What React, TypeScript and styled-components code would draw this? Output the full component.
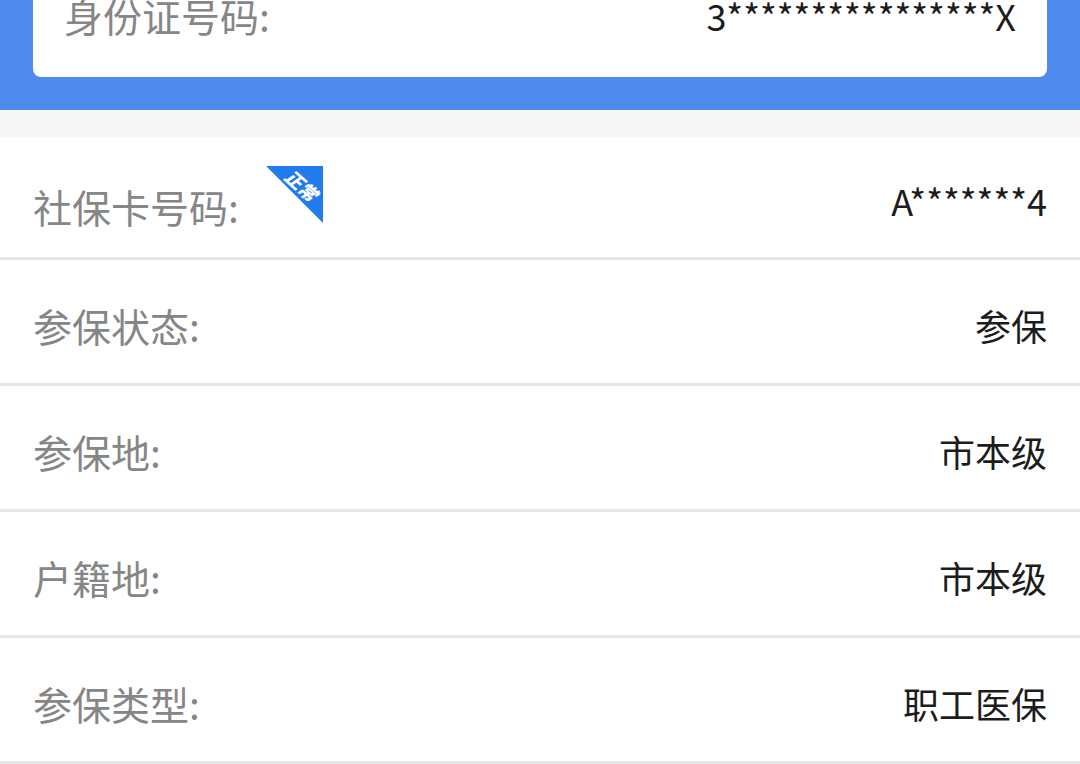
import React from "react";
import styled, { createGlobalStyle } from "styled-components";

const GlobalStyle = createGlobalStyle`
  * { box-sizing: border-box; }
  body {
    margin: 0;
    background: #fff;
    font-family: "Noto Sans CJK SC", "Noto Sans", sans-serif;
  }
`;

const Banner = styled.header`
  background: #4f8bec;
  padding: 0 33px 33px;
`;

const Card = styled.dl`
  margin: 0;
  height: 77px;
  padding: 0 31px 34px;
  display: flex;
  align-items: flex-end;
  justify-content: space-between;
  background: #fff;
  border-radius: 0 0 8px 8px;
`;

const Gap = styled.div`
  height: 27px;
  background: #f7f7f7;
`;

const List = styled.dl`
  margin: 0;
`;

const Row = styled.div`
  display: flex;
  align-items: center;
  justify-content: space-between;
  height: 126px;
  padding: 6px 33px 0;
  border-bottom: 3px solid #e6e6e6;

  &:first-child {
    height: 123px;
  }
`;

const Label = styled.dt<{ $tall?: boolean }>`
  display: flex;
  align-items: flex-end;
  height: ${(p) => (p.$tall ? "68px" : "56px")};
  font-size: 39px;
  line-height: 56px;
  color: #868686;
`;

const Value = styled.dd`
  margin: 0;
  font-size: 36px;
  line-height: 56px;
  color: #1c1c1c;
`;

const Badge = styled.svg`
  align-self: flex-start;
  width: 57px;
  height: 57px;
  margin-left: 27px;
`;

const rows = [
  { label: "社保卡号码:", value: "A*******4", badge: "正常" },
  { label: "参保状态:", value: "参保" },
  { label: "参保地:", value: "市本级" },
  { label: "户籍地:", value: "市本级" },
  { label: "参保类型:", value: "职工医保" },
];

export default function App() {
  return (
    <>
      <GlobalStyle />
      <Banner>
        <Card>
          <Label>身份证号码:</Label>
          <Value>3****************X</Value>
        </Card>
      </Banner>
      <Gap />
      <List>
        {rows.map((row) => (
          <Row key={row.label}>
            <Label $tall={Boolean(row.badge)}>
              {row.label}
              {row.badge && (
                <Badge viewBox="0 0 57 57">
                  <path d="M0 0H57V57Z" fill="#227bec" />
                  <text
                    x="35"
                    y="27"
                    transform="rotate(42 36 20)"
                    textAnchor="middle"
                    fontSize="18"
                    fontWeight="900"
                    fontStyle="italic"
                    fill="#fff"
                  >
                    {row.badge}
                  </text>
                </Badge>
              )}
            </Label>
            <Value>{row.value}</Value>
          </Row>
        ))}
      </List>
    </>
  );
}
